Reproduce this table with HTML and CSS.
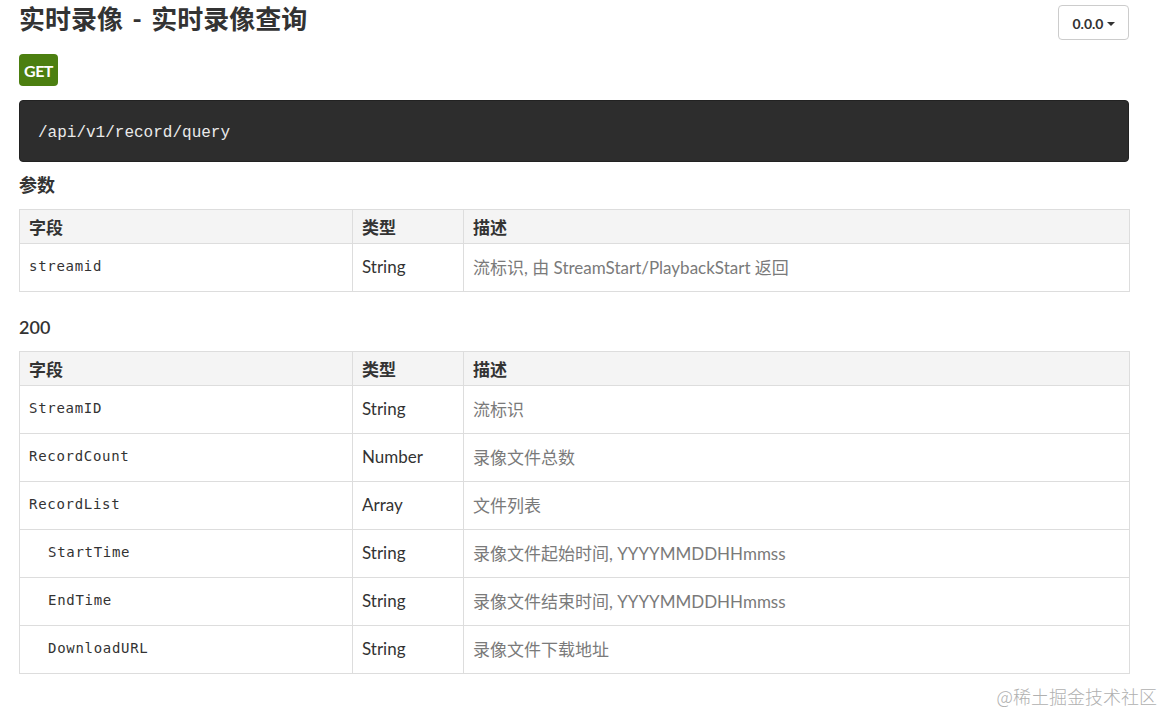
FILE: index.html
```html
<!DOCTYPE html>
<html lang="zh">
<head>
<meta charset="utf-8">
<title>实时录像查询</title>
<link rel="stylesheet" href="styles.css">
</head>
<body>
<div class="page">
  <div class="top">
    <h1 class="title">实时录像 - 实时录像查询</h1>
    <button class="version">0.0.0<span class="caret"></span></button>
  </div>
  <div class="badge-row"><span class="badge">GET</span></div>
  <pre class="endpoint">/api/v1/record/query</pre>

  <h4 class="section">参数</h4>
  <table class="fields">
    <colgroup><col class="c1"><col class="c2"><col class="c3"></colgroup>
    <thead><tr><th>字段</th><th>类型</th><th>描述</th></tr></thead>
    <tbody>
      <tr><td class="code">streamid</td><td>String</td><td class="desc">流标识, 由 StreamStart/PlaybackStart 返回</td></tr>
    </tbody>
  </table>

  <h4 class="section status">200</h4>
  <table class="fields">
    <colgroup><col class="c1"><col class="c2"><col class="c3"></colgroup>
    <thead><tr><th>字段</th><th>类型</th><th>描述</th></tr></thead>
    <tbody>
      <tr><td class="code">StreamID</td><td>String</td><td class="desc">流标识</td></tr>
      <tr><td class="code">RecordCount</td><td>Number</td><td class="desc">录像文件总数</td></tr>
      <tr><td class="code">RecordList</td><td>Array</td><td class="desc">文件列表</td></tr>
      <tr><td class="code nested">StartTime</td><td>String</td><td class="desc">录像文件起始时间, YYYYMMDDHHmmss</td></tr>
      <tr><td class="code nested">EndTime</td><td>String</td><td class="desc">录像文件结束时间, YYYYMMDDHHmmss</td></tr>
      <tr><td class="code nested">DownloadURL</td><td>String</td><td class="desc">录像文件下载地址</td></tr>
    </tbody>
  </table>
</div>
<div class="watermark">@稀土掘金技术社区</div>
</body>
</html>
```

FILE: styles.css
```css
html, body {
  margin: 0;
  padding: 0;
  background: #fff;
}
body {
  font-family: Lato, "Noto Sans CJK SC", sans-serif;
  color: #333;
  overflow: hidden;
}
.page {
  width: 1110px;
  margin-left: 19px;
}
.top {
  display: flex;
  justify-content: space-between;
  align-items: flex-start;
  height: 38px;
}
.title {
  margin: 0;
  font-size: 26px;
  line-height: 38px;
  font-weight: 700;
  color: #333;
  word-spacing: 3px;
  font-family: Lato, "Noto Sans CJK SC", sans-serif;
}
.version {
  margin-top: 5px;
  width: 71px;
  height: 35px;
  border: 1px solid #ccc;
  border-radius: 4px;
  background: #fff;
  font-family: Lato, "Noto Sans CJK SC", sans-serif;
  font-size: 14px;
  font-weight: 700;
  color: #333;
  display: flex;
  align-items: center;
  justify-content: center;
  padding: 0;
  padding-top: 1px;
}
.caret {
  display: inline-block;
  width: 0;
  height: 0;
  margin-left: 3px;
  margin-top: 1px;
  border-left: 4px solid transparent;
  border-right: 4px solid transparent;
  border-top: 4px solid #333;
}
.badge-row {
  margin-top: 16px;
  height: 32px;
}
.badge {
  display: inline-flex;
  align-items: center;
  justify-content: center;
  width: 39px;
  height: 32px;
  border-radius: 4px;
  background: #4c7f10;
  color: #fff;
  font-weight: 700;
  font-size: 16px;
  letter-spacing: -0.5px;
}
.endpoint {
  margin: 14px 0 0 0;
  height: 62px;
  box-sizing: border-box;
  background: #2d2d2d;
  border: 1px solid #222;
  border-radius: 4px;
  color: #eaeaea;
  font-family: "Liberation Mono", monospace;
  font-size: 16px;
  line-height: 60px;
  padding: 2px 0 0 18px;
}
.section {
  margin: 12px 0 13px 0;
  font-size: 18px;
  line-height: 22px;
  font-weight: 700;
  color: #333;
}
.section.status {
  margin-top: 24px;
  font-weight: 600;
}
.fields {
  width: 1110px;
  table-layout: fixed;
  border-collapse: collapse;
  font-size: 17px;
}
.c1 { width: 333px; }
.c2 { width: 111px; }
.c3 { width: 666px; }
.fields th {
  background: #f4f4f4;
  border: 1px solid #ddd;
  height: 34px;
  padding: 0 9px 1px 9px;
  text-align: left;
  font-weight: 700;
  font-size: 17px;
  color: #333;
  box-sizing: border-box;
}
.fields td {
  border: 1px solid #ddd;
  height: 48px;
  padding: 0 9px 2px 9px;
  box-sizing: border-box;
  color: #333;
  vertical-align: middle;
}
.fields td.code {
  font-family: "DejaVu Sans Mono", monospace;
  font-size: 14px;
  letter-spacing: 0.7px;
  padding-bottom: 4px;
}
.fields td.nested {
  padding-left: 28px;
}
.fields td.desc {
  color: #7a7a7a;
}
.watermark {
  position: absolute;
  right: 6px;
  top: 683px;
  font-family: "Noto Sans CJK SC", sans-serif;
  font-size: 18px;
  color: #b0b0b0;
  font-weight: 300;
}
```
